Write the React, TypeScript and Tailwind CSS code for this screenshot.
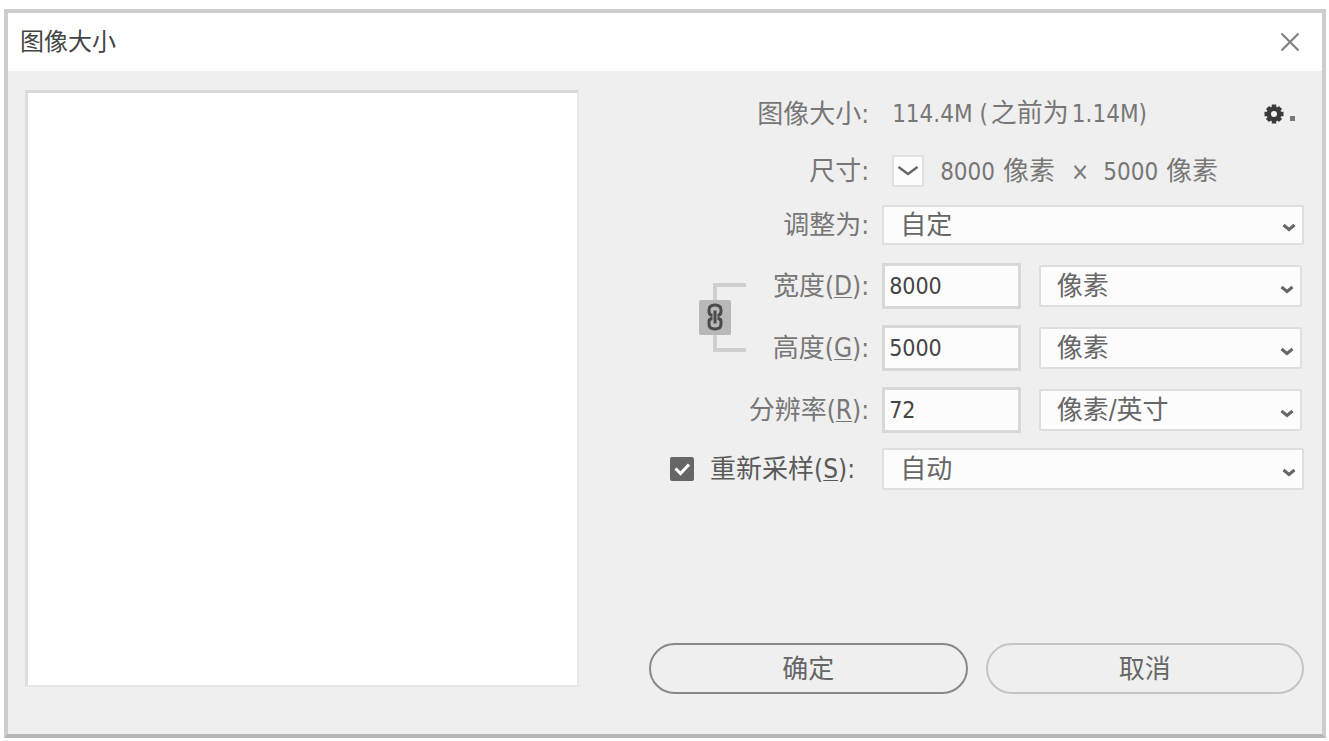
import { useState } from "react";
import type { ReactNode } from "react";

function Caret({ className = "" }: { className?: string }) {
  return (
    <svg
      viewBox="0 0 14 10"
      className={`pointer-events-none h-[10px] w-[14px] ${className}`}
      fill="none"
      stroke="#666"
      strokeWidth="3"
    >
      <path d="M1.5 2 L7 6.5 L12.5 2" />
    </svg>
  );
}

function Label({ htmlFor, text, hotkey }: { htmlFor?: string; text: string; hotkey?: string }) {
  return (
    <label htmlFor={htmlFor} className="text-[26px] leading-8 whitespace-nowrap">
      {text}
      {hotkey && (
        <>
          (<span className="underline decoration-1 underline-offset-2">{hotkey}</span>)
        </>
      )}
      :
    </label>
  );
}

function Row({ label, className = "", children }: { label: ReactNode; className?: string; children: ReactNode }) {
  return (
    <div className={`grid grid-cols-[220px_1fr] items-center gap-x-[13px] ${className}`}>
      <div className="flex justify-end">{label}</div>
      {children}
    </div>
  );
}

function Select({
  id,
  options,
  ariaLabel,
  className = "",
}: {
  id?: string;
  options: string[];
  ariaLabel?: string;
  className?: string;
}) {
  return (
    <div className={`relative ${className}`}>
      <select
        id={id}
        aria-label={ariaLabel}
        className="h-full w-full appearance-none rounded-xs border-2 border-[#dedede] bg-[#fcfcfc] pr-8 pl-4 text-[26px] leading-8 text-[#666]"
      >
        {options.map((o) => (
          <option key={o}>{o}</option>
        ))}
      </select>
      <Caret className="absolute right-2 bottom-3" />
    </div>
  );
}

function NumberWithUnit({ id, value, units }: { id: string; value: string; units: string[] }) {
  return (
    <div className="grid h-[62px] grid-cols-[139fr_264fr] items-center gap-x-[18px] pr-[2px]">
      <input
        id={id}
        defaultValue={value}
        className="h-[46px] w-full min-w-0 border-[3px] border-[#d8d8d8] bg-[#fcfcfc] pl-1 text-[23px] leading-8 text-[#444]"
      />
      <Select options={units} ariaLabel={`${id} unit`} className="h-[42px]" />
    </div>
  );
}

function LinkToggle() {
  const [linked, setLinked] = useState(true);
  return (
    <div className="flex w-[47px] flex-col">
      <div className="ml-[14px] h-[17px] border-t-4 border-l-4 border-[#cecece]" />
      <button
        type="button"
        aria-label="约束比例"
        aria-pressed={linked}
        onClick={() => setLinked(!linked)}
        className="flex h-[35px] w-8 items-center justify-center rounded-xs bg-[#b8b8b8]"
      >
        <svg viewBox="0 0 18 28" className="h-7 w-[18px]" fill="none" stroke="#4a4a4a" strokeWidth="3">
          <path d="M6.5 12.5 Q3 12 3 8.5 V7 Q3 2 9 2 Q15 2 15 7 V8.5 Q15 12 11.5 12.5" />
          <path d="M6.5 15.5 Q3 15.5 3 18.5 V21 Q3 26 9 26 Q15 26 15 21 V18.5 Q15 15.5 11.5 15.5" />
          <path d="M9 7.5 V20.5" />
        </svg>
      </button>
      <div className="ml-[14px] h-[17px] border-b-4 border-l-4 border-[#cecece]" />
    </div>
  );
}

function Gear() {
  return (
    <svg viewBox="0 0 32 22" className="h-[22px] w-8">
      <g stroke="#3a3a3a" strokeWidth="4.5">
        <path d="M10 1.5 V20.5 M0.5 11 H19.5 M3.5 4.5 L16.5 17.5 M16.5 4.5 L3.5 17.5" />
      </g>
      <circle cx="10" cy="11" r="5.2" fill="#f6f6f6" stroke="#3a3a3a" strokeWidth="4.4" />
      <rect x="26" y="13" width="5" height="5" fill="#777" />
    </svg>
  );
}

export default function App() {
  return (
    <div className="flex min-h-screen bg-white pt-[9px] pr-[3px] pb-[3px] pl-1 font-['DejaVu_Sans_Condensed','Noto_Sans_CJK_SC',sans-serif] text-[#777]">
      <div
        role="dialog"
        aria-labelledby="title"
        className="flex flex-1 flex-col border-4 border-[#cdcdcd] border-b-[#b5b5b5] bg-[#efefef]"
      >
        <header className="flex h-[58px] items-center justify-between bg-white pr-[22px] pl-3">
          <h1 id="title" className="text-2xl leading-8 text-[#444]">
            图像大小
          </h1>
          <button type="button" aria-label="关闭">
            <svg viewBox="0 0 20 20" className="size-5" stroke="#808080" strokeWidth="2.2">
              <path d="M1.5 1.5 L18.5 18.5 M18.5 1.5 L1.5 18.5" />
            </svg>
          </button>
        </header>

        <main className="grid flex-1 grid-cols-[11fr_13fr] gap-x-[70px] pt-[19px] pr-[18px] pb-10 pl-[17px]">
          {/* Preview */}
          <div className="mb-[7px] border-t-3 border-r-2 border-b-2 border-l-3 border-t-[#d8d8d8] border-r-[#e8e8e8] border-b-[#e8e8e8] border-l-[#dedede] bg-white" />

          <form className="flex flex-col" onSubmit={(e) => e.preventDefault()}>
            <Row label={<Label text="图像大小" />} className="h-[47px]">
              <div className="flex items-center justify-between pr-2 pl-[10px]">
                <p className="flex items-baseline text-2xl leading-8 whitespace-pre">
                  114.4M (<span className="mx-[3px] text-[26px] leading-8">之前为</span>1.14M)
                </p>
                <button type="button" aria-label="设置">
                  <Gear />
                </button>
              </div>
            </Row>

            <Row label={<Label text="尺寸" />} className="h-[68px]">
              <div className="flex items-center pl-[10px]">
                <button
                  type="button"
                  aria-label="更改尺寸单位"
                  className="mr-4 flex size-8 items-center justify-center rounded-xs border-2 border-[#e0e0e0] bg-[#fcfcfc]"
                >
                  <svg viewBox="0 0 22 12" className="h-3 w-[22px]" fill="none" stroke="#666" strokeWidth="2.6">
                    <path d="M1.5 2 L11 9 L20.5 2" />
                  </svg>
                </button>
                <p className="flex items-baseline text-2xl leading-8">
                  8000
                  <span className="mr-4 ml-2 text-[26px] leading-8">像素</span>
                  <span className="mr-[14px] leading-8">×</span>
                  5000
                  <span className="ml-2 text-[26px] leading-8">像素</span>
                </p>
              </div>
            </Row>

            <Row label={<Label htmlFor="fit" text="调整为" />} className="mb-[10px] h-10">
              <Select id="fit" options={["自定", "原稿大小", "自动分辨率"]} className="h-10" />
            </Row>

            <div className="grid grid-cols-[220px_1fr] gap-x-[13px]">
              <div className="flex items-center justify-between pl-[50px]">
                <LinkToggle />
                <div>
                  <div className="flex h-[62px] items-center justify-end">
                    <Label htmlFor="width" text="宽度" hotkey="D" />
                  </div>
                  <div className="flex h-[62px] items-center justify-end">
                    <Label htmlFor="height" text="高度" hotkey="G" />
                  </div>
                </div>
              </div>
              <div>
                <NumberWithUnit id="width" value="8000" units={["像素", "百分比", "厘米"]} />
                <NumberWithUnit id="height" value="5000" units={["像素", "百分比", "厘米"]} />
              </div>
            </div>

            <Row label={<Label htmlFor="resolution" text="分辨率" hotkey="R" />}>
              <NumberWithUnit id="resolution" value="72" units={["像素/英寸", "像素/厘米"]} />
            </Row>

            <Row
              className="h-14"
              label={
                <div className="flex items-center gap-4 pr-[14px] text-[#5a5a5a]">
                  <span className="relative flex">
                    <input
                      id="resample"
                      type="checkbox"
                      defaultChecked
                      className="peer size-6 appearance-none rounded-xs border-2 border-[#666] checked:bg-[#666]"
                    />
                    <svg
                      viewBox="0 0 24 24"
                      className="pointer-events-none absolute inset-0 hidden size-6 peer-checked:block"
                      fill="none"
                      stroke="white"
                      strokeWidth="3"
                    >
                      <path d="M5.5 11.5 L10.5 16.5 L19 7.5" />
                    </svg>
                  </span>
                  <Label htmlFor="resample" text="重新采样" hotkey="S" />
                </div>
              }
            >
              <Select ariaLabel="重新采样方式" options={["自动", "保留细节", "两次立方"]} className="h-[42px]" />
            </Row>

            <div className="mt-auto grid grid-cols-2 gap-x-[18px] text-[26px] leading-8 text-[#666]">
              <button type="submit" className="h-[51px] rounded-full border-2 border-[#888]">
                确定
              </button>
              <button type="button" className="h-[51px] rounded-full border-2 border-[#c4c4c4]">
                取消
              </button>
            </div>
          </form>
        </main>
      </div>
    </div>
  );
}
